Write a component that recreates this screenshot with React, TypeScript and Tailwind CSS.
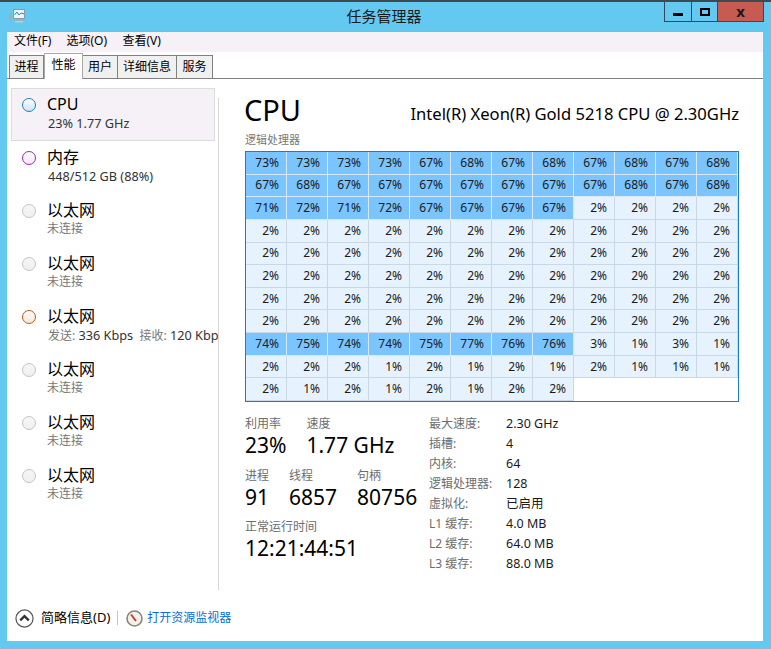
const cpuRows = [
  [73, 73, 73, 73, 67, 68, 67, 68, 67, 68, 67, 68],
  [67, 68, 67, 67, 67, 67, 67, 67, 67, 68, 67, 68],
  [71, 72, 71, 72, 67, 67, 67, 67, 2, 2, 2, 2],
  [2, 2, 2, 2, 2, 2, 2, 2, 2, 2, 2, 2],
  [2, 2, 2, 2, 2, 2, 2, 2, 2, 2, 2, 2],
  [2, 2, 2, 2, 2, 2, 2, 2, 2, 2, 2, 2],
  [2, 2, 2, 2, 2, 2, 2, 2, 2, 2, 2, 2],
  [2, 2, 2, 2, 2, 2, 2, 2, 2, 2, 2, 2],
  [74, 75, 74, 74, 75, 77, 76, 76, 3, 1, 3, 1],
  [2, 2, 2, 1, 2, 1, 2, 1, 2, 1, 1, 1],
  [2, 1, 2, 1, 2, 1, 2, 2],
];

const idleRing = "border-[#c4c4c4]";
const idleFill = "from-[#f6f6f6] to-[#f0f0f0]";

const sidebar = [
  { name: "CPU", sub: "23% 1.77 GHz", ring: "border-[#1c7ec2]", fill: "from-[#ffffff] to-[#cfe4f5]" },
  { name: "内存", sub: "448/512 GB (88%)", ring: "border-[#8e2fa8]", fill: "from-[#ffffff] to-[#f3e6f7]" },
  { name: "以太网", sub: "未连接", ring: idleRing, fill: idleFill },
  { name: "以太网", sub: "未连接", ring: idleRing, fill: idleFill },
  { name: "以太网", sub: "traffic", ring: "border-[#b85c14]", fill: "from-[#ffffff] to-[#fbe6d6]" },
  { name: "以太网", sub: "未连接", ring: idleRing, fill: idleFill },
  { name: "以太网", sub: "未连接", ring: idleRing, fill: idleFill },
  { name: "以太网", sub: "未连接", ring: idleRing, fill: idleFill },
];

const specs = [
  ["最大速度:", "2.30 GHz"],
  ["插槽:", "4"],
  ["内核:", "64"],
  ["逻辑处理器:", "128"],
  ["虚拟化:", "已启用"],
  ["L1 缓存:", "4.0 MB"],
  ["L2 缓存:", "64.0 MB"],
  ["L3 缓存:", "88.0 MB"],
];

function Stat({ label, value }: { label: string; value: string }) {
  return (
    <div>
      <div className="text-[12px] leading-[16px] text-[#6d6d6d]">{label}</div>
      <div className="text-[21px] leading-[27px] text-black">{value}</div>
    </div>
  );
}

function SubLine({ sub }: { sub: string }) {
  if (sub === "未连接") {
    return <div className="text-[12px] leading-[18px] text-[#777777]">{sub}</div>;
  }
  if (sub === "traffic") {
    return (
      <div className="text-[12.7px] leading-[18px] text-[#333333] pl-px">
        <span className="text-[12px] text-[#777777]">发送:</span> 336 Kbps{" "}
        <span className="text-[12px] text-[#777777] ml-[3px]">接收:</span> 120 Kbps
      </div>
    );
  }
  return <div className="text-[12.7px] leading-[18px] text-[#333333] pl-px">{sub}</div>;
}

function AppIcon() {
  return (
    <svg width="17" height="15" viewBox="0 0 17 15">
      <rect x="0.5" y="4" width="2" height="8" fill="#9fb0a8" />
      <rect x="4.5" y="0.5" width="11" height="9" fill="#eaf6fb" stroke="#8c9aa3" />
      <path d="M5.5 6 L8 3 L10 6 L12 4 L15 5" fill="none" stroke="#3a7fc2" />
      <rect x="8" y="10" width="4" height="2" fill="#a5b0b6" />
      <rect x="6" y="12" width="8" height="1.5" fill="#c2cbd0" />
    </svg>
  );
}

export default function App() {
  return (
    <div className="w-[771px] h-[649px] flex flex-col bg-[#63c9f0] border-t-2 border-[#3d4a52] font-['Noto_Sans','Noto_Sans_CJK_SC',sans-serif] text-black overflow-hidden">
      <div className="h-[29px] grid grid-cols-[1fr_auto_1fr] shrink-0">
        <div className="pl-[9px] pt-[7px]">
          <AppIcon />
        </div>
        <div className="pt-[4px] pr-[3px] text-[15px] leading-[20px] text-[#1a1a1a]">任务管理器</div>
        <div className="flex justify-end items-start pr-[7px]">
          <div className="flex h-[20px] border border-t-0 border-[#33495a]">
            <div className="w-[27px] flex items-center justify-center border-r border-[#33495a]">
              <div className="w-[10px] h-[3px] mt-[5px] bg-black" />
            </div>
            <div className="w-[26px] flex items-center justify-center border-r border-[#33495a]">
              <div className="w-[10px] h-[8px] border-2 border-black" />
            </div>
            <div className="w-[45px] flex items-center justify-center bg-[#c75b52] text-[15px] font-bold leading-none text-[#1a1a1a]">
              x
            </div>
          </div>
        </div>
      </div>

      <div className="mx-[7px] w-[756px] h-[610px] bg-white border-t border-[#8fb4c8] flex flex-col">
        <div className="h-[20px] bg-[#f5f1f6] flex items-start gap-[15px] pl-[7px] text-[12px] leading-[18px] shrink-0">
          <span>文件(F)</span>
          <span className="w-[41px]">选项(O)</span>
          <span>查看(V)</span>
        </div>

        <div className="h-[27px] flex items-end pl-[2px] border-b border-[#808080] text-[12px] leading-[21px] shrink-0">
          <div className="h-[23px] w-[35px] text-center bg-[#f0f0f0] border border-b-0 border-[#808080]">进程</div>
          <div className="h-[26px] w-[39px] -mb-px text-center bg-white border border-b-0 border-[#a8a8a8] z-10">性能</div>
          <div className="h-[23px] w-[35px] text-center bg-[#f0f0f0] border border-l-0 border-b-0 border-[#808080]">用户</div>
          <div className="h-[23px] w-[59px] text-center bg-[#f0f0f0] border border-l-0 border-b-0 border-[#808080]">详细信息</div>
          <div className="h-[23px] w-[36px] text-center bg-[#f0f0f0] border border-l-0 border-b-0 border-[#808080]">服务</div>
        </div>

        <div className="flex flex-1 min-h-0">
          <div className="w-[212px] shrink-0 pl-[4px] pt-[9px]">
            <div className="w-[207px] h-[503px] overflow-hidden">
              {sidebar.map((item, i) => (
                <div
                  key={i}
                  className={`w-[204px] h-[53px] flex pt-[5px] pl-[10px] whitespace-nowrap border ${
                    i === 0 ? "bg-[#f5f1f6] border-[#dcdcdc]" : "border-transparent"
                  }`}
                >
                  <div className={`w-[14px] h-[14px] mt-[4px] rounded-full border-[1.5px] bg-linear-to-b shrink-0 ${item.ring} ${item.fill}`} />
                  <div className="ml-[11px]">
                    <div className="text-[16px] leading-[20px]">{item.name}</div>
                    <SubLine sub={item.sub} />
                  </div>
                </div>
              ))}
            </div>
          </div>

          <div className="flex-1 flex flex-col min-w-0 pr-[24px] pl-[26px]">
            <div className="flex">
              <div className="w-px h-[492px] mt-[19px] -ml-[27px] mr-[26px] bg-[#d8d8d8] shrink-0" />
              <div className="flex-1 min-w-0 pt-[13px]">
                <div className="flex justify-between items-end h-[36px]">
                  <span className="text-[29px] leading-[36px] -ml-px">CPU</span>
                  <span className="text-[16.6px] leading-[24px] pb-[2px]">Intel(R) Xeon(R) Gold 5218 CPU @ 2.30GHz</span>
                </div>
                <div className="text-[11px] leading-[14px] text-[#777777] mt-[5px] mb-[4px]">逻辑处理器</div>

                <div className="h-[251px] border border-[#1c7ec2] grid grid-cols-12 grid-rows-11">
                  {cpuRows.flat().map((v, i) => (
                    <div
                      key={i}
                      className={`flex items-center justify-end pr-[7px] text-[12px] leading-none text-[#1a1a1a] border-r border-b border-[#c8d8e6] ${
                        v > 10 ? "bg-[#7ac4ff] border-[#d9e8f5]" : "bg-[#e6f3ff]"
                      }`}
                    >
                      {v}%
                    </div>
                  ))}
                </div>

                <div className="flex mt-[12px]">
                  <div className="w-[184px] shrink-0 pt-[2px]">
                    <div className="flex gap-[20px]">
                      <Stat label="利用率" value="23%" />
                      <Stat label="速度" value="1.77 GHz" />
                    </div>
                    <div className="flex gap-[20px] mt-[9px]">
                      <Stat label="进程" value="91" />
                      <Stat label="线程" value="6857" />
                      <Stat label="句柄" value="80756" />
                    </div>
                    <div className="mt-[8px]">
                      <Stat label="正常运行时间" value="12:21:44:51" />
                    </div>
                  </div>
                  <div className="grid grid-cols-[77px_auto] auto-rows-[20px] text-[12px] leading-[20px]">
                    {specs.map(([k, v]) => (
                      <div key={k} className="contents">
                        <span className="text-[#6d6d6d]">{k}</span>
                        <span className="text-[12.5px] text-[#1a1a1a]">{v}</span>
                      </div>
                    ))}
                  </div>
                </div>
              </div>
            </div>
          </div>
        </div>

        <div className="h-[50px] flex items-center pl-[8px] pt-[4px] text-[12px] shrink-0">
          <svg width="19" height="19" viewBox="0 0 20 20">
            <circle cx="10" cy="10" r="9" fill="#fff" stroke="#555" strokeWidth="1.3" />
            <path d="M5.5 12 L10 7.5 L14.5 12" fill="none" stroke="#333" strokeWidth="2.4" />
          </svg>
          <span className="ml-[7px] text-[13px]">简略信息(D)</span>
          <div className="w-px h-[14px] bg-[#c4c4c4] ml-[7px]" />
          <svg className="ml-[8px]" width="17" height="17" viewBox="0 0 17 17">
            <circle cx="8.5" cy="8.5" r="7.5" fill="#f4f0ea" stroke="#8c8478" strokeWidth="1.6" />
            <path d="M5 4.5 L10 11" stroke="#c8342a" strokeWidth="1.8" />
          </svg>
          <span className="ml-[4px] text-[#0b6ed0]">打开资源监视器</span>
        </div>
      </div>
    </div>
  );
}
